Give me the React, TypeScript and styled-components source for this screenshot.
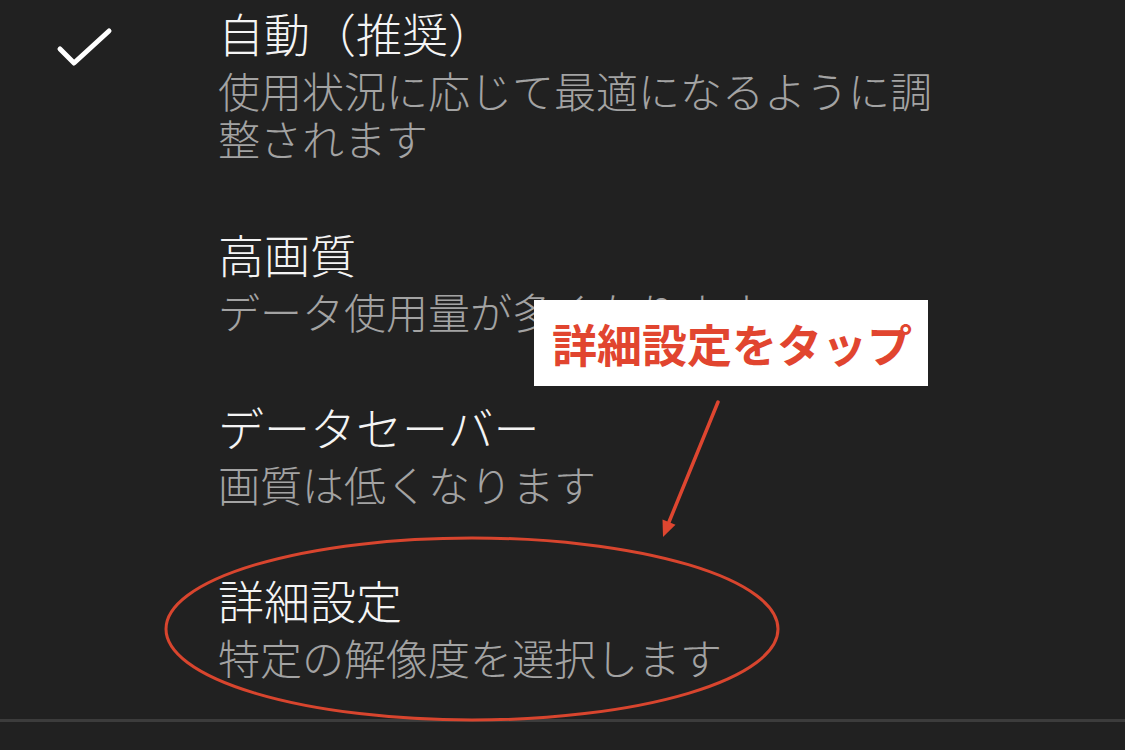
import React from "react";
import styled, { createGlobalStyle } from "styled-components";

const Global = createGlobalStyle`
  html, body {
    margin: 0;
    padding: 0;
    background: #212121;
  }
  body {
    font-family: "Noto Sans CJK JP", "Noto Sans", sans-serif;
  }
`;

const Screen = styled.div`
  position: relative;
  width: 1125px;
  height: 750px;
  overflow: hidden;
  background: #212121;
`;

const List = styled.div`
  display: flex;
  flex-direction: column;
  margin-top: -29px;
`;

const Option = styled.div`
  display: grid;
  grid-template-columns: 218px 1fr;
  padding: 31px 0 30px;
`;

const CheckCell = styled.div`
  position: relative;
`;

const CheckIcon = styled.svg`
  display: block;
  margin: 25px 0 0 55px;
`;

const Texts = styled.div`
  display: flex;
  flex-direction: column;
  gap: 4px;
  max-width: 730px;
`;

const Title = styled.div`
  color: #f4f4f4;
  font-size: 46px;
  line-height: 60px;
  font-weight: 300;
  white-space: nowrap;
`;

const Subtitle = styled.div`
  color: #a3a3a3;
  font-size: 42px;
  line-height: 48px;
  font-weight: 300;
`;

const Divider = styled.div`
  margin-top: 8px;
  height: 3px;
  background: #3c3c3c;
`;

const Overlay = styled.svg`
  position: absolute;
  left: 0;
  top: 0;
  pointer-events: none;
`;

const Callout = styled.div`
  position: absolute;
  left: 534px;
  top: 300px;
  width: 394px;
  height: 86px;
  box-sizing: border-box;
  background: #ffffff;
  display: flex;
  align-items: center;
  padding-left: 18px;
  color: #e1452f;
  font-size: 45px;
  font-weight: 700;
  white-space: nowrap;
`;

type Item = { title: string; desc: string; checked?: boolean };

const items: Item[] = [
  { title: "自動（推奨）", desc: "使用状況に応じて最適になるように調整されます", checked: true },
  { title: "高画質", desc: "データ使用量が多くなります" },
  { title: "データセーバー", desc: "画質は低くなります" },
  { title: "詳細設定", desc: "特定の解像度を選択します" },
];

export default function App() {
  return (
    <>
      <Global />
      <Screen>
        <List>
          {items.map((it) => (
            <Option key={it.title}>
              <CheckCell>
                {it.checked && (
                  <CheckIcon width="60" height="44" viewBox="0 0 60 44">
                    <polyline
                      points="5,22 19,36 54,4"
                      fill="none"
                      stroke="#ffffff"
                      strokeWidth="5"
                      strokeLinecap="round"
                      strokeLinejoin="round"
                    />
                  </CheckIcon>
                )}
              </CheckCell>
              <Texts>
                <Title>{it.title}</Title>
                <Subtitle>{it.desc}</Subtitle>
              </Texts>
            </Option>
          ))}
        </List>
        <Divider />
        <Overlay width="1125" height="750" viewBox="0 0 1125 750">
          <ellipse
            cx="472"
            cy="629"
            rx="306"
            ry="91"
            fill="none"
            stroke="#d8452e"
            strokeWidth="3"
          />
          <line
            x1="718"
            y1="402"
            x2="669"
            y2="522"
            stroke="#de4630"
            strokeWidth="3.5"
            strokeLinecap="round"
          />
          <polygon points="663,537 675.5,524.8 662.5,519.6" fill="#de4630" />
        </Overlay>
        <Callout>詳細設定をタップ</Callout>
      </Screen>
    </>
  );
}
